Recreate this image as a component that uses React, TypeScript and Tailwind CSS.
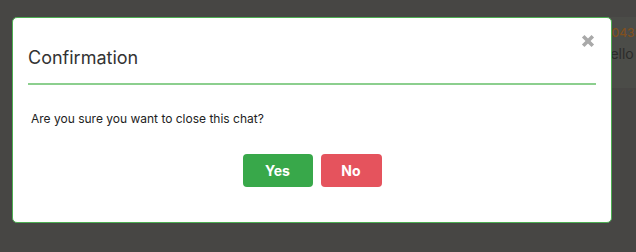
import React from 'react';

const CloseIcon: React.FC = () => (
  <svg width="14" height="14" viewBox="0 0 14 14" aria-hidden="true">
    <path d="M2.2 2.2 L11.8 11.8 M11.8 2.2 L2.2 11.8" stroke="#a9a9a9" strokeWidth="3.6" strokeLinecap="butt" />
  </svg>
);

const App: React.FC = () => {
  return (
    <div className="relative w-[636px] h-[252px] overflow-hidden bg-[#474644] font-['Inter','Liberation_Sans',sans-serif]">
      {/* page behind the overlay */}
      <div className="flex h-full">
        <div className="flex-1" />
        <div className="w-[80px] pt-[17px]">
          <div className="h-[71px] bg-[#4b4c48] pl-[40px] pt-[9px] whitespace-nowrap">
            <div className="text-[12px] font-medium text-[#80501f] leading-[14px]">9404335</div>
            <div className="mt-[5px] pl-[4px] text-[14px] text-[#2b2b2a] leading-[18px]">Hello sir</div>
          </div>
        </div>
      </div>

      {/* modal */}
      <div className="absolute left-[12px] top-[17px] w-[600px] h-[206px] bg-white border border-[#4cae52] rounded-[5px] flex flex-col">
        <div className="relative mx-[15px] pt-[29px] pb-[14px] border-b-2 border-[#8ccf8e]">
          <h3 className="text-[18px] leading-[22px] text-[#333] font-normal">Confirmation</h3>
          <button className="absolute right-[1px] top-[16px]">
            <CloseIcon />
          </button>
        </div>
        <div className="px-[18px] pt-[26px] text-[12px] leading-[16px] text-[#222]">
          Are you sure you want to close this chat?
        </div>
        <div className="flex justify-center gap-[8px] mt-[27px]">
          <button className="w-[70px] h-[33px] rounded-[4px] bg-[#38a84a] text-white text-[14px] font-bold">Yes</button>
          <button className="w-[61px] h-[33px] rounded-[4px] bg-[#e5535d] text-white text-[14px] font-bold">No</button>
        </div>
      </div>
    </div>
  );
};

export default App;
